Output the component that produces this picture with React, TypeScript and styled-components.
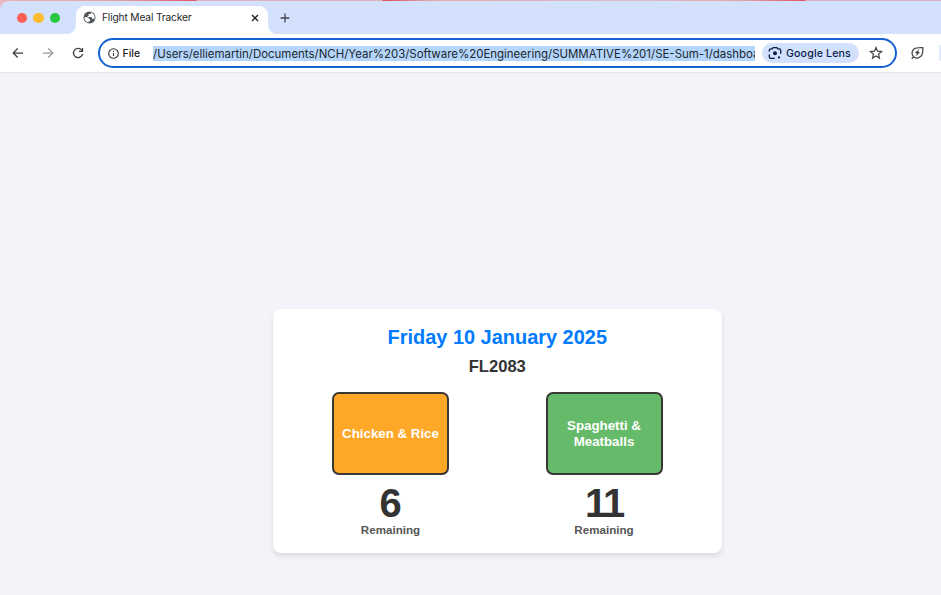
import React from "react";
import styled, { createGlobalStyle } from "styled-components";

const GlobalStyle = createGlobalStyle`
  * { box-sizing: border-box; }
  html, body, #root { height: 100%; }
  body { margin: 0; overflow: hidden; background: #f3f3f9; }
`;

const Window = styled.div`
  height: 100%;
  display: flex;
  flex-direction: column;
  font-family: "Liberation Sans", Arial, sans-serif;
  background: #e6bcc6;
`;

const DesktopEdge = styled.div`
  flex: none;
  height: 1px;
  background: linear-gradient(90deg, #e9b5b3 0, #e5a0a0 120px, #e25562 196px, #dfb3bb 197px, #e0b4bd 382px, #e24a58 383px, #dfa9b2 430px, #dfbdc5 640px, #e1a4ad 740px, #e25560 805px, #dcb3c6 806px, #dcb3c6 100%);
`;

const TabStrip = styled.header`
  flex: none;
  height: 33px;
  display: flex;
  background: #d3e1fd;
  border-radius: 9px 0 0 0;
  font-family: Inter, sans-serif;
`;

const TrafficLights = styled.div`
  width: 76px;
  height: 33px;
  padding: 1px 0 0 16.5px;
  display: flex;
  align-items: center;
  gap: 6.3px;
`;

const Light = styled.span<{ $color: string }>`
  width: 10.4px;
  height: 10.4px;
  border-radius: 50%;
  background: ${(p) => p.$color};
`;

const Tab = styled.div`
  position: relative;
  width: 192px;
  height: 28px;
  margin-top: 5px;
  padding: 0 8px 5px 6.5px;
  display: flex;
  align-items: center;
  background: #fff;
  border-radius: 9px 9px 0 0;

  &::before,
  &::after {
    content: "";
    position: absolute;
    bottom: 0;
    width: 9px;
    height: 9px;
  }
  &::before {
    right: 100%;
    background: radial-gradient(circle at 0 0, transparent 8.5px, #fff 9.2px);
  }
  &::after {
    left: 100%;
    background: radial-gradient(circle at 100% 0, transparent 8.5px, #fff 9.2px);
  }
`;

const TabTitle = styled.span`
  flex: 1;
  margin-left: 6.5px;
  padding-bottom: 1px;
  font-size: 10.2px;
  line-height: 14px;
  letter-spacing: -0.15px;
  white-space: nowrap;
  color: #24262a;
`;

const NewTab = styled.div`
  padding: 11px 0 0 11px;
  svg { display: block; }
`;

const Toolbar = styled.nav`
  flex: none;
  height: 39px;
  display: flex;
  align-items: center;
  background: #fff;
  border-bottom: 1px solid #e6e6ea;
  font-family: Inter, sans-serif;
`;

const NavButtons = styled.div`
  width: 98px;
  padding-left: 10.5px;
  display: flex;
  align-items: center;
  gap: 16px;
`;

const AddressBar = styled.div`
  width: 799px;
  height: 30px;
  padding: 0 12px 0 7.5px;
  display: flex;
  align-items: center;
  border: 2px solid #1560d2;
  border-radius: 15px;
`;

const Scheme = styled.span`
  flex: none;
  width: 30.5px;
  margin-left: 4px;
  padding-top: 1px;
  font-size: 10.5px;
  line-height: 14px;
  font-weight: 500;
  color: #202124;
`;

const Url = styled.div`
  flex: none;
  width: 602px;
  height: 15px;
  margin-right: 7px;
  overflow: hidden;
  white-space: nowrap;
  background: #b4d6fc;
  color: #22262c;
  font-size: 11.46px;
  line-height: 16px;
`;

const LensChip = styled.div`
  flex: none;
  width: 97px;
  height: 20px;
  padding-left: 6px;
  display: flex;
  align-items: center;
  gap: 4px;
  white-space: nowrap;
  border-radius: 10px;
  background: #d3e1fd;
`;

const LensLabel = styled.span`
  padding-top: 1px;
  color: #0a1d4c;
  font-size: 10.6px;
  line-height: 13px;
  font-weight: 500;
  letter-spacing: 0.15px;
`;

const StarSlot = styled.div`
  margin-left: 10px;
  svg { display: block; }
`;

const LeafSlot = styled.div`
  flex: 1;
  margin-left: 13px;
  svg { display: block; }
`;

const ToolbarEdge = styled.div`
  width: 2px;
  height: 16px;
  border-radius: 8px 0 0 8px;
  background: #e0eafd;
`;

const Page = styled.main`
  flex: 1;
  display: flex;
  justify-content: center;
  align-items: flex-start;
  padding: 236px 0 0 53.5px;
  background: #f3f3f9;
`;

const Card = styled.section`
  width: 448.5px;
  height: 244px;
  padding: 16px 27px 0;
  border-radius: 8px;
  background: #fff;
  box-shadow: 0 3px 5px rgba(0, 0, 0, 0.1);
  text-align: center;
`;

const DateTitle = styled.h1`
  margin: 0;
  font-size: 19.95px;
  line-height: 24px;
  color: #007bff;
`;

const FlightNumber = styled.h2`
  margin: 8px 0 0;
  font-size: 16.6px;
  line-height: 20px;
  color: #333;
`;

const Meals = styled.div`
  margin-top: 15px;
  padding: 0 32px;
  display: flex;
  justify-content: space-between;
`;

const Meal = styled.div`
  width: 117px;
`;

const MealButton = styled.button<{ $color: string }>`
  display: block;
  width: 117px;
  height: 83px;
  padding: 0 4px;
  border: 2px solid #3a3835;
  border-radius: 7px;
  background: ${(p) => p.$color};
  color: #fff;
  font: bold 13.3px/15.5px "Liberation Sans", Arial, sans-serif;
`;

const Count = styled.div<{ $spacing: number }>`
  margin-top: 7px;
  font-size: 39.9px;
  font-weight: bold;
  line-height: 42px;
  letter-spacing: ${(p) => p.$spacing}px;
  color: #333;
`;

const Remaining = styled.div`
  font-size: 11.6px;
  font-weight: bold;
  line-height: 11px;
  color: #555;
`;

const stroke = (color: string, width: number) => ({
  fill: "none",
  stroke: color,
  strokeWidth: width,
});

const Globe = () => (
  <svg width="13" height="13" viewBox="0 0 13 13">
    <circle cx="6.5" cy="6.5" r="6" fill="#51565d" />
    <path
      d="M1.4 6.3h2.7c1.2 0 1.9.8 1.9 1.8h1.1v2.2H5.5v1.3C3.1 11.2 1.3 9.1 1.4 6.3zM8 1.5v.4c0 .7-.5 1.2-1.2 1.2H5.6v1.2c0 .6-.5.9-1 .9v.9h2.9c1.1 0 1.6.7 1.6 1.6h1.3l.8.7c1.200-2.900-.1-5.800-3.200-6.900z"
      fill="#fff"
    />
  </svg>
);

const Close = () => (
  <svg width="10" height="10" viewBox="0 0 10 10">
    <path d="M2 2l6 6M8 2L2 8" {...stroke("#202124", 1.35)} />
  </svg>
);

const Plus = () => (
  <svg width="12" height="12" viewBox="0 0 12 12">
    <path d="M6 1.600v8.800M1.600 6h8.800" {...stroke("#43474e", 1.3)} />
  </svg>
);

const Arrow = ({ forward = false }: { forward?: boolean }) => (
  <svg width="14" height="14" viewBox="0 0 14 14">
    <path
      d={forward ? "M2 7h9.600M7.300 2.500L11.800 7l-4.500 4.500" : "M12 7H2.300M6.700 2.500L2.200 7l4.500 4.500"}
      {...stroke(forward ? "#9a9a9d" : "#3c3e41", 1.25)}
    />
  </svg>
);

const Reload = () => (
  <svg width="14" height="14" viewBox="0 0 14 14">
    <path d="M11 4.600A4.600 4.600 0 1 0 11.600 8" {...stroke("#3c3e41", 1.3)} />
    <path d="M11.500 1.900v3.500H8" {...stroke("#3c3e41", 1.3)} />
  </svg>
);

const Info = () => (
  <svg width="11" height="11" viewBox="0 0 11 11">
    <circle cx="5.500" cy="5.500" r="4.800" {...stroke("#303236", 1.1)} />
    <path d="M5.500 4.900v3.200M5.500 2.700v1.200" {...stroke("#303236", 1.1)} />
  </svg>
);

const Lens = () => (
  <svg width="14" height="14" viewBox="0 0 14 14">
    <path
      d="M1.300 5.400V4.300c0-.9.600-1.500 1.500-1.500h1.400l.9-1.200h3.800l.9 1.200h1.400c.9 0 1.500.6 1.500 1.500v3.500M1.300 8.600v2.200c0 .9.600 1.500 1.500 1.500h4"
      {...stroke("#0a1d4c", 1.35)}
    />
    <circle cx="7" cy="7.300" r="2" fill="#0a1d4c" />
    <circle cx="11" cy="11.400" r="1.150" fill="#0a1d4c" />
  </svg>
);

const Star = () => (
  <svg width="14" height="14" viewBox="0 0 14 14">
    <path
      d="M7 1.500l1.550 3.700 4 .35-3 2.650.9 3.900L7 10.050 3.550 12.100l.9-3.900-3-2.650 4-.35z"
      {...stroke("#43464a", 1.25)}
    />
  </svg>
);

const Leaf = () => (
  <svg width="15" height="14" viewBox="0 0 15 14">
    <path
      d="M1.700 12.700l2.300-2.200M3.600 10.800C1.300 8.500 1.600 4.800 4 3c2.200-1.700 5.300-1.300 8.800-1.400 0 3.400.3 6.700-1.900 8.700-2.100 2-5.200 2.400-7.300.5z"
      {...stroke("#43464a", 1.25)}
    />
    <path d="M9.200 3.300L4.900 6.800l2 .7-1.100 2.700 4.200-3.700-1.900-.6z" fill="#43464a" />
  </svg>
);

const meals = [
  { label: "Chicken & Rice", count: 6, color: "#ffa726" },
  { label: "Spaghetti & Meatballs", count: 11, color: "#66bb6a" },
];

export default function App() {
  return (
    <>
      <GlobalStyle />
      <Window>
        <DesktopEdge />
        <TabStrip>
          <TrafficLights>
            <Light $color="#ff5f57" />
            <Light $color="#febc2e" />
            <Light $color="#28c840" />
          </TrafficLights>
          <Tab>
            <Globe />
            <TabTitle>Flight Meal Tracker</TabTitle>
            <Close />
          </Tab>
          <NewTab>
            <Plus />
          </NewTab>
        </TabStrip>
        <Toolbar>
          <NavButtons>
            <Arrow />
            <Arrow forward />
            <Reload />
          </NavButtons>
          <AddressBar>
            <Info />
            <Scheme>File</Scheme>
            <Url>/Users/elliemartin/Documents/NCH/Year%203/Software%20Engineering/SUMMATIVE%201/SE-Sum-1/dashboa</Url>
            <LensChip>
              <Lens />
              <LensLabel>Google Lens</LensLabel>
            </LensChip>
            <StarSlot>
              <Star />
            </StarSlot>
          </AddressBar>
          <LeafSlot>
            <Leaf />
          </LeafSlot>
          <ToolbarEdge />
        </Toolbar>
        <Page>
          <Card>
            <DateTitle>Friday 10 January 2025</DateTitle>
            <FlightNumber>FL2083</FlightNumber>
            <Meals>
              {meals.map((meal) => (
                <Meal key={meal.label}>
                  <MealButton $color={meal.color}>{meal.label}</MealButton>
                  <Count $spacing={meal.count > 9 ? -2 : 0}>{meal.count}</Count>
                  <Remaining>Remaining</Remaining>
                </Meal>
              ))}
            </Meals>
          </Card>
        </Page>
      </Window>
    </>
  );
}
